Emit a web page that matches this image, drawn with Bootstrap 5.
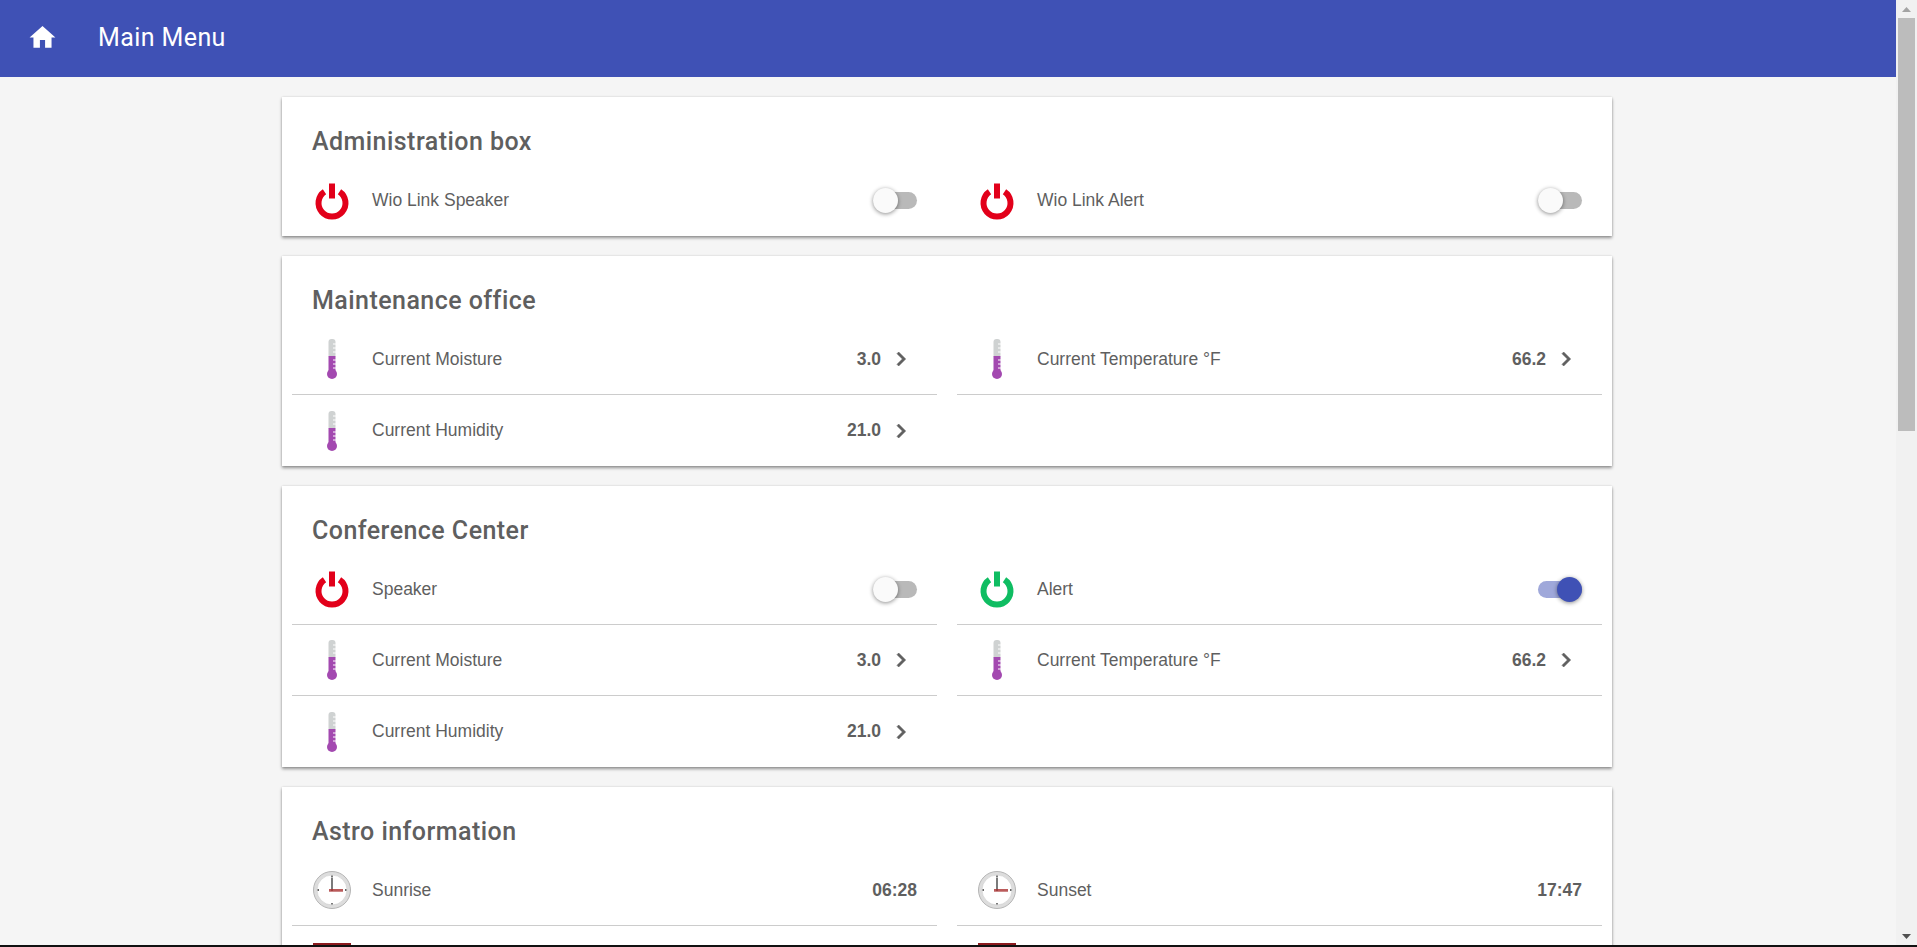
<!DOCTYPE html>
<html lang="en">
<head>
  <meta charset="UTF-8">
  <title>Main Menu</title>
  <link href="https://cdn.jsdelivr.net/npm/bootstrap@5.3.2/dist/css/bootstrap.min.css" rel="stylesheet">
  <style>
    html, body { height: 100%; overflow: hidden; }
    body {
      background-color: #f5f5f5;
      color: #5f5f5f;
      font-family: "Liberation Sans", Arial, sans-serif;
      border-bottom: 2px solid #111;
    }
    .page-col { min-width: 0; }
    .top-bar {
      background-color: #3f51b5;
      height: 77px;
      padding: 0;
      color: #fff;
    }
    .home-icon { width: 31px; height: 31px; margin-left: 27px; margin-right: 40px; margin-top: -2px; fill: #fff; }
    .top-title { font: 400 25px Roboto, sans-serif; letter-spacing: .4px; color: #fff; margin-top: -2px; }
    .sheet { width: 1330px; margin-left: 282px; padding-top: 20px; }
    .box-card {
      border: 0;
      border-radius: 0;
      background: #fff;
      box-shadow: 0 2px 3px rgba(0,0,0,.4), 0 0 2px rgba(0,0,0,.12);
      margin-bottom: 20px;
      padding: 0 10px;
    }
    .box-title {
      font: 500 25px/68px Roboto, sans-serif;
      letter-spacing: .45px;
      color: #5f5f5f;
      height: 68px;
      padding: 11px 0 0 20px;
      margin: 0;
    }
    .box-grid { --bs-gutter-x: 20px; --bs-gutter-y: 0; }
    .item-row {
      height: 71px;
      padding: 0 20px;
      border-bottom: 1px solid #ccc;
      font-size: 17.5px;
    }
    .item-row.no-line { border-bottom: 0; }
    .item-icon { width: 40px; height: 40px; margin-right: 20px; flex: none; }
    .item-value { font-weight: 700; }
    .item-arrow { width: 28px; height: 28px; margin-left: 6px; margin-right: 2px; fill: #5f5f5f; stroke: #5f5f5f; stroke-width: .5; }
    .toggle-track {
      width: 44px;
      height: 17px;
      border-radius: 9px;
      background: #b9b9b9;
    }
    .toggle-knob {
      width: 25px;
      height: 25px;
      margin: -4px 0;
      border-radius: 50%;
      background: #fafafa;
      box-shadow: 0 1px 4px rgba(0,0,0,.45);
    }
    .toggle-track.is-on { background: #9fa8da; justify-content: flex-end; }
    .toggle-track.is-on .toggle-knob { background: #3f51b5; }
    .fake-scroll { width: 21px; background: #f1f1f1; flex: none; }
    .scroll-arrow { height: 18px; }
    .scroll-thumb { height: 413px; margin: 0 2px; background: #bcbcbc; }
  </style>
</head>
<body class="d-flex">

<svg width="0" height="0" class="d-none" aria-hidden="true">
  <symbol id="ic-power" viewBox="0 0 40 40">
    <path d="M12.500 10.800A13.500 13.500 0 1 0 27.500 10.800" fill="none" stroke="currentColor" stroke-width="6"/>
    <rect x="17" y="2.500" width="6" height="15" fill="currentColor"/>
  </symbol>
  <symbol id="ic-thermo" viewBox="0 0 40 40">
    <rect x="16.500" y="0" width="7" height="19" rx="3" fill="#cfd2d2"/>
    <path d="M16.500 17h7v17h-7z" fill="#a349b0"/>
    <circle cx="20" cy="35" r="5" fill="#a349b0"/>
    <path d="M21 5h3M21 9h3M21 13h3M21 21h3M21 25h3M21 29h3" stroke="#fff" stroke-width="1"/>
  </symbol>
  <symbol id="ic-clock" viewBox="0 0 40 40">
    <circle cx="20" cy="20" r="18.500" fill="#ddd" stroke="#b5b5b5"/>
    <circle cx="20" cy="20" r="15" fill="#fff" stroke="#ccc" stroke-width=".6"/>
    <path d="M20 5.500v1.500M20 33v1.500M5.500 20H7M33 20h1.500" stroke="#333" stroke-width="1.300"/>
    <path d="M20 7.500V22" stroke="#222" stroke-width="1.200"/>
    <path d="M17 20h14" stroke="#a33" stroke-width="1.600"/>
    <path d="M17 21.500h14" stroke="#c88" stroke-width="1"/>
  </symbol>
  <symbol id="ic-date" viewBox="0 0 40 40">
    <rect x="1" y="2" width="38" height="36" fill="#8b1a1e"/>
  </symbol>
  <symbol id="ic-chevron" viewBox="0 0 24 24">
    <path d="M10 6 8.600 7.400 13.200 12l-4.600 4.600L10 18l6-6z"/>
  </symbol>
</svg>

<div class="page-col flex-grow-1 d-flex flex-column overflow-hidden">
  <nav class="navbar top-bar flex-nowrap justify-content-start flex-shrink-0">
    <svg class="home-icon" viewBox="0 0 24 24"><path d="M10 20v-6h4v6h5v-8h3L12 3 2 12h3v8z"/></svg>
    <span class="top-title">Main Menu</span>
  </nav>

  <div class="sheet flex-shrink-0">
    <div class="card box-card">
      <h2 class="box-title">Administration box</h2>
      <div class="row box-grid">
        <div class="col-6">
          <div class="item-row no-line d-flex align-items-center">
            <svg class="item-icon" style="color:#e2001a"><use href="#ic-power"/></svg>
            <span class="flex-grow-1">Wio Link Speaker</span>
            <span class="toggle-track d-flex align-items-center"><span class="toggle-knob"></span></span>
          </div>
        </div>
        <div class="col-6">
          <div class="item-row no-line d-flex align-items-center">
            <svg class="item-icon" style="color:#e2001a"><use href="#ic-power"/></svg>
            <span class="flex-grow-1">Wio Link Alert</span>
            <span class="toggle-track d-flex align-items-center"><span class="toggle-knob"></span></span>
          </div>
        </div>
      </div>
    </div>

    <div class="card box-card">
      <h2 class="box-title">Maintenance office</h2>
      <div class="row box-grid">
        <div class="col-6">
          <div class="item-row d-flex align-items-center">
            <svg class="item-icon"><use href="#ic-thermo"/></svg>
            <span class="flex-grow-1">Current Moisture</span>
            <span class="item-value">3.0</span>
            <svg class="item-arrow"><use href="#ic-chevron"/></svg>
          </div>
        </div>
        <div class="col-6">
          <div class="item-row d-flex align-items-center">
            <svg class="item-icon"><use href="#ic-thermo"/></svg>
            <span class="flex-grow-1">Current Temperature °F</span>
            <span class="item-value">66.2</span>
            <svg class="item-arrow"><use href="#ic-chevron"/></svg>
          </div>
        </div>
        <div class="col-6">
          <div class="item-row no-line d-flex align-items-center">
            <svg class="item-icon"><use href="#ic-thermo"/></svg>
            <span class="flex-grow-1">Current Humidity</span>
            <span class="item-value">21.0</span>
            <svg class="item-arrow"><use href="#ic-chevron"/></svg>
          </div>
        </div>
      </div>
    </div>

    <div class="card box-card">
      <h2 class="box-title">Conference Center</h2>
      <div class="row box-grid">
        <div class="col-6">
          <div class="item-row d-flex align-items-center">
            <svg class="item-icon" style="color:#e2001a"><use href="#ic-power"/></svg>
            <span class="flex-grow-1">Speaker</span>
            <span class="toggle-track d-flex align-items-center"><span class="toggle-knob"></span></span>
          </div>
        </div>
        <div class="col-6">
          <div class="item-row d-flex align-items-center">
            <svg class="item-icon" style="color:#0fbd62"><use href="#ic-power"/></svg>
            <span class="flex-grow-1">Alert</span>
            <span class="toggle-track is-on d-flex align-items-center"><span class="toggle-knob"></span></span>
          </div>
        </div>
        <div class="col-6">
          <div class="item-row d-flex align-items-center">
            <svg class="item-icon"><use href="#ic-thermo"/></svg>
            <span class="flex-grow-1">Current Moisture</span>
            <span class="item-value">3.0</span>
            <svg class="item-arrow"><use href="#ic-chevron"/></svg>
          </div>
        </div>
        <div class="col-6">
          <div class="item-row d-flex align-items-center">
            <svg class="item-icon"><use href="#ic-thermo"/></svg>
            <span class="flex-grow-1">Current Temperature °F</span>
            <span class="item-value">66.2</span>
            <svg class="item-arrow"><use href="#ic-chevron"/></svg>
          </div>
        </div>
        <div class="col-6">
          <div class="item-row no-line d-flex align-items-center">
            <svg class="item-icon"><use href="#ic-thermo"/></svg>
            <span class="flex-grow-1">Current Humidity</span>
            <span class="item-value">21.0</span>
            <svg class="item-arrow"><use href="#ic-chevron"/></svg>
          </div>
        </div>
      </div>
    </div>

    <div class="card box-card">
      <h2 class="box-title">Astro information</h2>
      <div class="row box-grid">
        <div class="col-6">
          <div class="item-row d-flex align-items-center">
            <svg class="item-icon"><use href="#ic-clock"/></svg>
            <span class="flex-grow-1">Sunrise</span>
            <span class="item-value">06:28</span>
          </div>
        </div>
        <div class="col-6">
          <div class="item-row d-flex align-items-center">
            <svg class="item-icon"><use href="#ic-clock"/></svg>
            <span class="flex-grow-1">Sunset</span>
            <span class="item-value">17:47</span>
          </div>
        </div>
        <div class="col-6">
          <div class="item-row d-flex align-items-center">
            <svg class="item-icon"><use href="#ic-date"/></svg>
          </div>
        </div>
        <div class="col-6">
          <div class="item-row d-flex align-items-center">
            <svg class="item-icon"><use href="#ic-date"/></svg>
          </div>
        </div>
      </div>
    </div>
  </div>
</div>

<div class="fake-scroll d-flex flex-column">
  <div class="scroll-arrow d-flex justify-content-center align-items-center">
    <svg width="9" height="5"><path d="M4.500 0 9 5H0z" fill="#a3a3a3"/></svg>
  </div>
  <div class="scroll-thumb"></div>
  <div class="flex-grow-1"></div>
  <div class="scroll-arrow d-flex justify-content-center align-items-center">
    <svg width="9" height="5"><path d="M4.500 5 9 0H0z" fill="#505050"/></svg>
  </div>
</div>

<script src="https://cdn.jsdelivr.net/npm/bootstrap@5.3.2/dist/js/bootstrap.bundle.min.js"></script>
</body>
</html>
